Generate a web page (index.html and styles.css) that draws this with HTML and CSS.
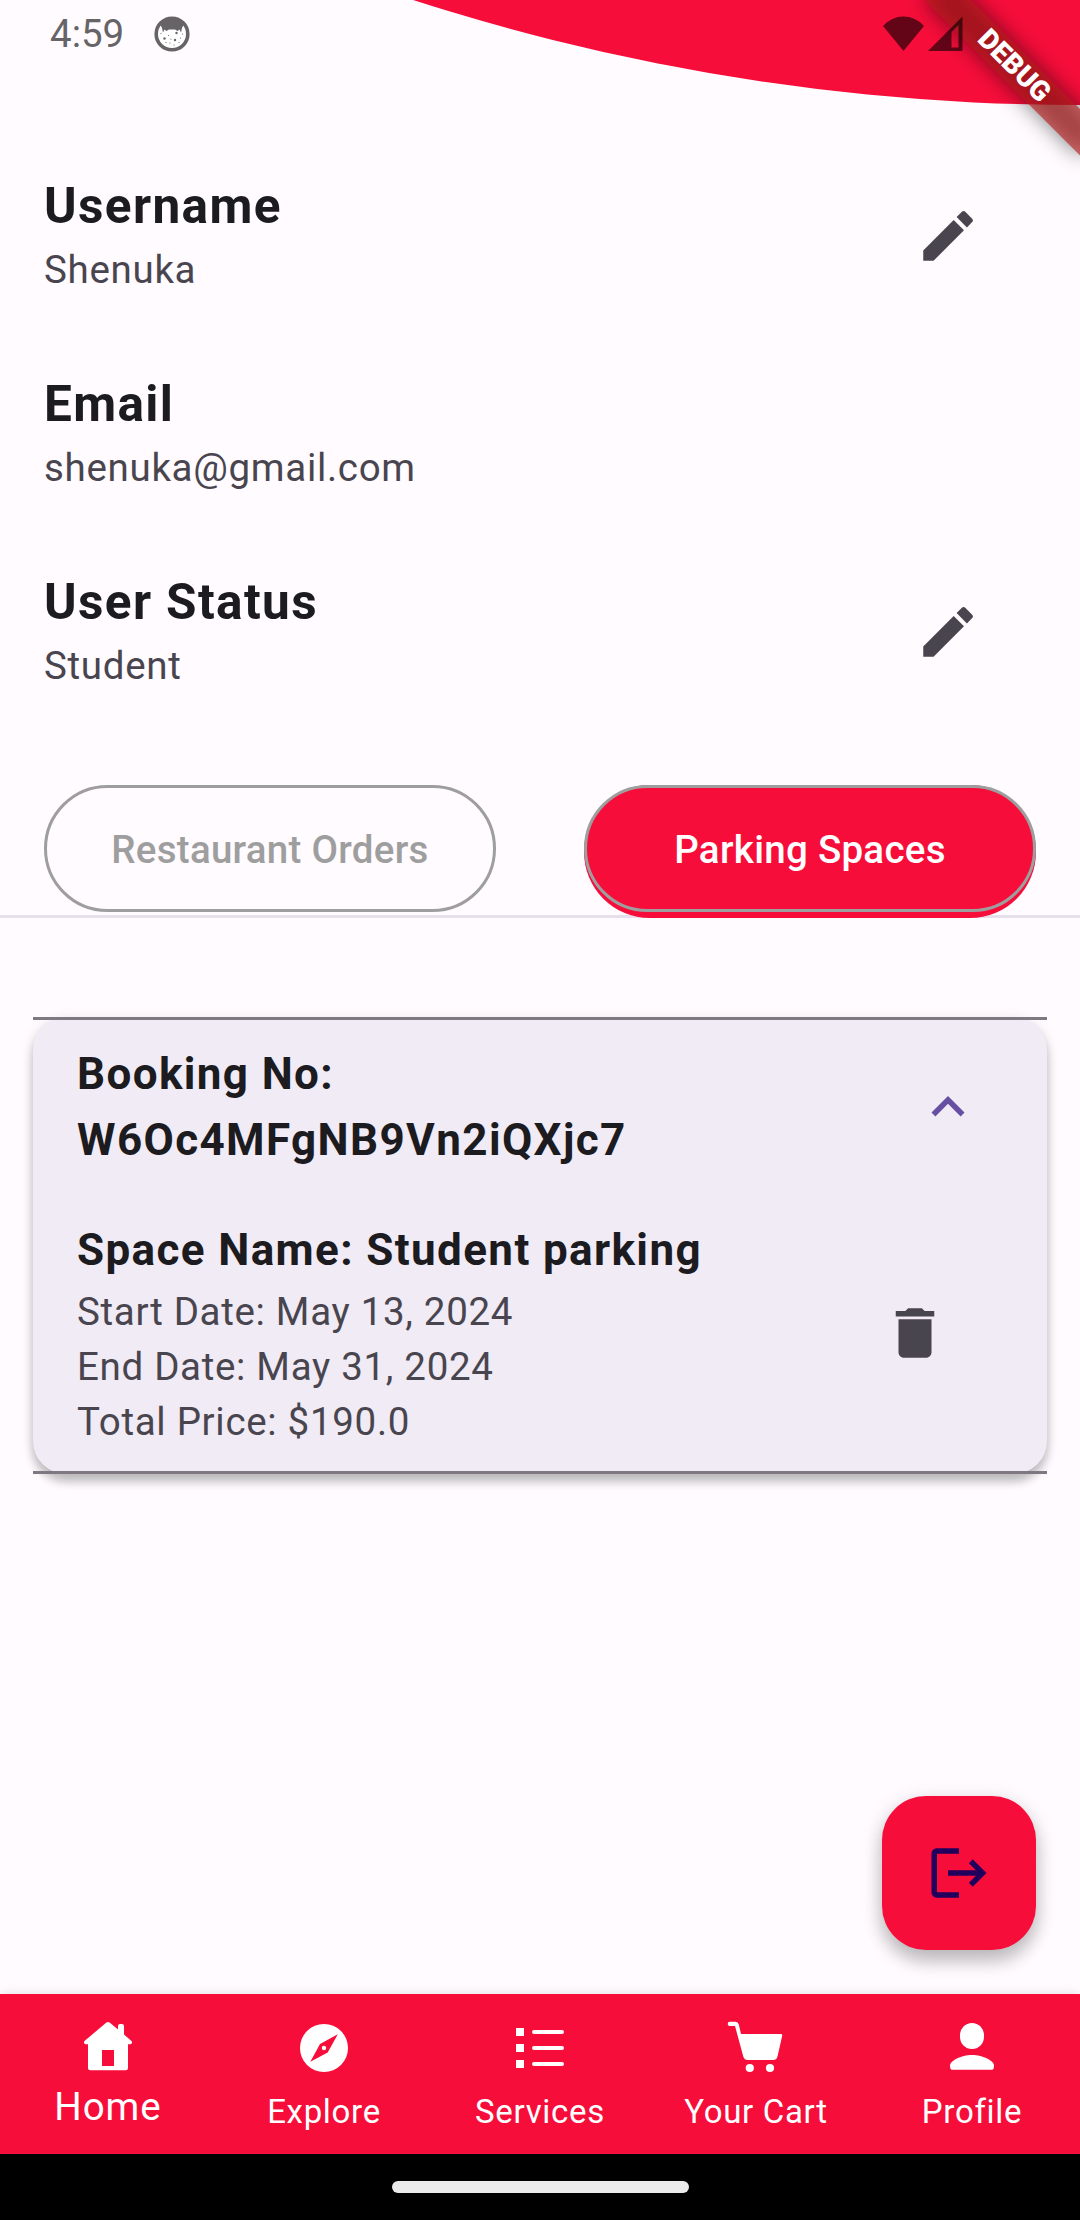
FILE: index.html
```html
<!DOCTYPE html>
<html lang="en">
<head>
<meta charset="utf-8">
<title>Profile</title>
<link rel="stylesheet" href="styles.css">
</head>
<body>
<svg class="header-curve" viewBox="0 0 1080 110"><circle cx="1080" cy="-2065" r="2170"/></svg>

<div class="debug-banner"><span class="debug-text">DEBUG</span></div>

<header class="status-bar">
  <div class="status-left">
    <span class="clock">4:59</span>
    <svg class="notif-icon" viewBox="0 0 36 36">
      <circle class="ring" cx="18" cy="18" r="15.800"/>
      <path d="M6 8C9 3 14 2 18 2s9 1 12 6L28 12l-1 4.500-1.500-3-2 1.500-2.500-1.500h-6L12.500 15l-2-1.500-1.500 3L8 12z"/>
      <circle cx="22.500" cy="17" r="1.200"/><circle cx="10.500" cy="22.500" r="1.200"/><circle cx="21" cy="24" r="1.200"/>
      <circle cx="14.500" cy="19.500" r=".6"/><circle cx="26.500" cy="22" r=".6"/><circle cx="16" cy="27" r=".6"/><circle cx="7" cy="17.500" r=".6"/><circle cx="20" cy="29" r=".6"/><circle cx="28.500" cy="18" r=".6"/><circle cx="12" cy="26.500" r=".6"/><circle cx="17" cy="23" r=".6"/><circle cx="25" cy="26.500" r=".6"/>
    </svg>
  </div>
  <div class="status-right">
    <svg class="wifi" viewBox="0 0 41 35"><path d="M0 10Q8.500.5 20.500.5T41 10L20.500 35z"/></svg>
    <svg class="signal" viewBox="0 0 35 35"><path fill-rule="evenodd" d="M0 35L34.500.5V35zM23.500 16v15.500h7V9z"/></svg>
  </div>
</header>

<main class="content">
  <section class="profile">
    <div class="tile">
      <div><h2 class="tile-title">Username</h2><p class="tile-sub">Shenuka</p></div>
      <svg class="icon" viewBox="0 0 24 24"><path d="M3 17.250V21h3.750L17.810 9.940l-3.750-3.750L3 17.250zM20.710 7.040a1 1 0 0 0 0-1.410l-2.340-2.340a1 1 0 0 0-1.410 0l-1.830 1.830 3.750 3.750 1.830-1.830z"/></svg>
    </div>
    <div class="tile">
      <div><h2 class="tile-title">Email</h2><p class="tile-sub">shenuka@gmail.com</p></div>
    </div>
    <div class="tile">
      <div><h2 class="tile-title">User Status</h2><p class="tile-sub">Student</p></div>
      <svg class="icon" viewBox="0 0 24 24"><path d="M3 17.250V21h3.750L17.810 9.940l-3.750-3.750L3 17.250zM20.710 7.040a1 1 0 0 0 0-1.410l-2.340-2.340a1 1 0 0 0-1.410 0l-1.830 1.830 3.750 3.750 1.830-1.830z"/></svg>
    </div>
  </section>

  <nav class="tabs">
    <div class="tab"><span class="pill">Restaurant Orders</span></div>
    <div class="tab active"><span class="pill">Parking Spaces</span></div>
  </nav>

  <section class="booking">
    <div class="booking-head">
      <h3 class="booking-title">Booking No:<br>W6Oc4MFgNB9Vn2iQXjc7</h3>
      <svg class="icon chevron" viewBox="0 0 24 24"><path d="M12 8l-6 6 1.410 1.410L12 10.830l4.590 4.580L18 14z"/></svg>
    </div>
    <div class="booking-body">
      <div>
        <h3 class="booking-title">Space Name: Student parking</h3>
        <p class="tile-sub">Start Date: May 13, 2024</p>
        <p class="tile-sub">End Date: May 31, 2024</p>
        <p class="tile-sub">Total Price: $190.0</p>
      </div>
      <svg class="icon" viewBox="0 0 24 24"><path d="M6 19c0 1.100.9 2 2 2h8c1.100 0 2-.9 2-2V7H6v12zM19 4h-3.500l-1-1h-5l-1 1H5v2h14V4z"/></svg>
    </div>
  </section>

  <button class="fab" aria-label="Log out">
    <svg class="icon" viewBox="0 0 24 24"><path d="M17 7l-1.410 1.410L18.170 11H8v2h10.170l-2.580 2.580L17 17l5-5zM4 5h8V3H4c-1.100 0-2 .9-2 2v14c0 1.100.9 2 2 2h8v-2H4V5z"/></svg>
  </button>
</main>

<nav class="bottom-nav">
  <a class="nav-item selected">
    <svg class="nav-icon" viewBox="0 0 66 66"><path fill-rule="evenodd" d="M31.400 7.600q1.600-1.300 3.200 0L43 14.500V11q0-2 2-2h2q2 0 2 2v8.500l7.200 6.200q1.300 1.300.6 2.600-.5.900-1.800.9H53v23.500q0 2.500-2.500 2.500h-35Q13 55.200 13 52.700V29.200h-2q-1.300 0-1.800-.9-.7-1.300.6-2.600zM27 35v16h12V35z"/></svg>
    <span class="nav-label">Home</span>
  </a>
  <a class="nav-item">
    <svg class="nav-icon" viewBox="0 0 66 66"><path fill-rule="evenodd" d="M33 9a24 24 0 1 0 0 48 24 24 0 1 0 0-48zM46.800 19.300L36.700 37.500 19.300 46.700 29 29z"/><circle cx="33" cy="33" r="2.200"/></svg>
    <span class="nav-label">Explore</span>
  </a>
  <a class="nav-item">
    <svg class="nav-icon" viewBox="0 0 66 66"><path d="M9 13h8v8H9zM9 29h8v8H9zM9 45h8v8H9z"/><path class="stroke" d="M27 17h28M27 33h28M27 49h28"/></svg>
    <span class="nav-label">Services</span>
  </a>
  <a class="nav-item">
    <svg class="nav-icon" viewBox="0 0 66 66"><path d="M6.700 6.800H12.500q2.600 0 3.300 2.700L18 19H58q1.600 0 1.200 1.700L54.500 41.500Q53.700 45 50 45H25q-3.700 0-4.700-3.500L12 11H6.700q-2 0-2-2.100t2-2.100z"/><circle cx="26.800" cy="53" r="4.100"/><circle cx="47" cy="53" r="4.100"/></svg>
    <span class="nav-label">Your Cart</span>
  </a>
  <a class="nav-item">
    <svg class="nav-icon" viewBox="0 0 66 66"><rect x="21" y="8" width="24" height="26" rx="12"/><path d="M13 54.700q-2 0-2-4.200C11 46 22 40 33 40s22 6 22 10.500q0 4.200-2 4.200z"/></svg>
    <span class="nav-label">Profile</span>
  </a>
</nav>
<footer class="gesture-bar"><span class="handle"></span></footer>
</body>
</html>
```

FILE: styles.css
```css
* { box-sizing: border-box; margin: 0; padding: 0; }

body {
  position: relative;
  display: flex;
  flex-direction: column;
  width: 1080px;
  height: 2220px;
  overflow: hidden;
  background: #fffbff;
  color: #1c1b1f;
  font-family: Roboto, "Liberation Sans", sans-serif;
}

svg { display: block; flex: none; fill: currentColor; }

.header-curve {
  position: absolute;
  top: 0;
  left: 0;
  width: 1080px;
  height: 110px;
  color: #f70d3a;
}

/* Corner ribbon, rotated around the top right corner of the window */
.debug-banner {
  position: absolute;
  top: 77px;
  left: 970px;
  width: 220px;
  height: 33px;
  display: flex;
  align-items: center;
  justify-content: center;
  transform: rotate(45deg);
  transform-origin: 110px -77px;
}
.debug-banner::before,
.debug-banner::after {
  content: "";
  position: absolute;
  inset: 0;
}
.debug-banner::before { background: rgba(0, 0, 0, .5); filter: blur(10.5px); }
.debug-banner::after { background: rgba(183, 28, 28, .627); }
.debug-text {
  position: relative;
  z-index: 1;
  margin-top: -2px;
  color: #fff;
  font-size: 28px;
  font-weight: 900;
  line-height: 33px;
}

.status-bar {
  position: relative;
  flex: none;
  display: flex;
  justify-content: space-between;
  align-items: center;
  height: 67px;
  padding: 0 117px 0 50px;
}
.status-left { display: flex; align-items: center; gap: 30px; color: #666467; }
.clock { font-size: 38.5px; line-height: 67px; }
.notif-icon { width: 36px; height: 36px; }
.ring { fill: #fff; stroke: currentColor; stroke-width: 3.6; }
.status-right { display: flex; align-items: center; gap: 4px; color: rgba(0, 0, 0, .6); }
.wifi { width: 41px; height: 35px; }
.signal { width: 35px; height: 35px; }

.content {
  flex: 1;
  display: flex;
  flex-direction: column;
  padding-top: 67px;
}
.tile {
  display: flex;
  align-items: center;
  justify-content: space-between;
  height: 198px;
  padding: 0 99px 0 44px;
}
.tile-title {
  margin-bottom: -1px;
  font-size: 49.5px;
  font-weight: 700;
  line-height: 74px;
  letter-spacing: 1.375px;
}
.tile-sub {
  color: #49454f;
  font-size: 38.5px;
  line-height: 55px;
  letter-spacing: .6875px;
}
.icon { width: 66px; height: 66px; color: #49454f; }
.tile .icon { margin-top: 6px; }

.tabs {
  display: flex;
  margin-top: 57px;
  height: 133px;
  background: linear-gradient(#e7e0ec, #e7e0ec) 0 130px / 100% 3px no-repeat;
}
.tab { flex: 1; display: flex; align-items: flex-start; margin: 0 44px; border-radius: 66px; }
.pill {
  display: flex;
  align-items: center;
  justify-content: center;
  width: 100%;
  height: 127px;
  padding-top: 2px;
  border: 3px solid #9e9e9e;
  border-radius: 64px;
  color: #9e9e9e;
  font-size: 38.5px;
  font-weight: 500;
  letter-spacing: .275px;
}
.active { background: #f70d3a; }
.active .pill { color: #fff; }

.booking {
  position: relative;
  height: 457px;
  margin: 99px 33px 0;
  padding: 24px 44px 0;
  border-radius: 33px;
  background: #f0ebf5;
  box-shadow: 0 8px 10px rgba(0, 0, 0, .2), 0 3px 14px rgba(0, 0, 0, .12);
}
.booking::before,
.booking::after {
  content: "";
  position: absolute;
  left: 0;
  right: 0;
  height: 3px;
  background: #7f7882;
}
.booking::before { top: 0; }
.booking::after { bottom: 0; }
.booking-head,
.booking-body { display: flex; align-items: center; justify-content: space-between; }
.booking-head { padding-right: 22px; }
.booking-body { margin-top: 44px; padding-right: 55px; }
.booking-title {
  font-size: 44px;
  font-weight: 700;
  line-height: 66px;
  letter-spacing: 1.375px;
}
.booking-body .booking-title { margin-bottom: 1px; }
.chevron { color: #6750a4; }

.fab {
  display: flex;
  align-items: center;
  justify-content: center;
  width: 154px;
  height: 154px;
  margin: auto 44px 44px auto;
  border: 0;
  border-radius: 44px;
  background: #f70d3a;
  box-shadow: 0 12px 18px rgba(0, 0, 0, .2), 0 4px 22px rgba(0, 0, 0, .13);
}
.fab .icon { color: #21005d; }

.bottom-nav {
  position: relative;
  flex: none;
  display: grid;
  grid-template-columns: repeat(5, 1fr);
  height: 160px;
  background: #f70d3a;
  color: #fff;
  box-shadow: 0 0 10px rgba(0, 0, 0, .12);
}
.nav-item { display: flex; flex-direction: column; align-items: center; padding-top: 21px; }
.nav-icon { width: 66px; height: 66px; }
.stroke { fill: none; stroke: currentColor; stroke-width: 4; stroke-linecap: round; }
.nav-label {
  margin-top: 7px;
  font-size: 33px;
  line-height: 47px;
  letter-spacing: .6875px;
}
.selected .nav-label {
  margin-top: -2px;
  font-size: 38.5px;
  line-height: 55px;
  letter-spacing: 1px;
}

.gesture-bar {
  flex: none;
  display: flex;
  align-items: center;
  justify-content: center;
  height: 66px;
  background: #000;
}
.handle { width: 297px; height: 12px; border-radius: 6px; background: #ebebeb; }
```
